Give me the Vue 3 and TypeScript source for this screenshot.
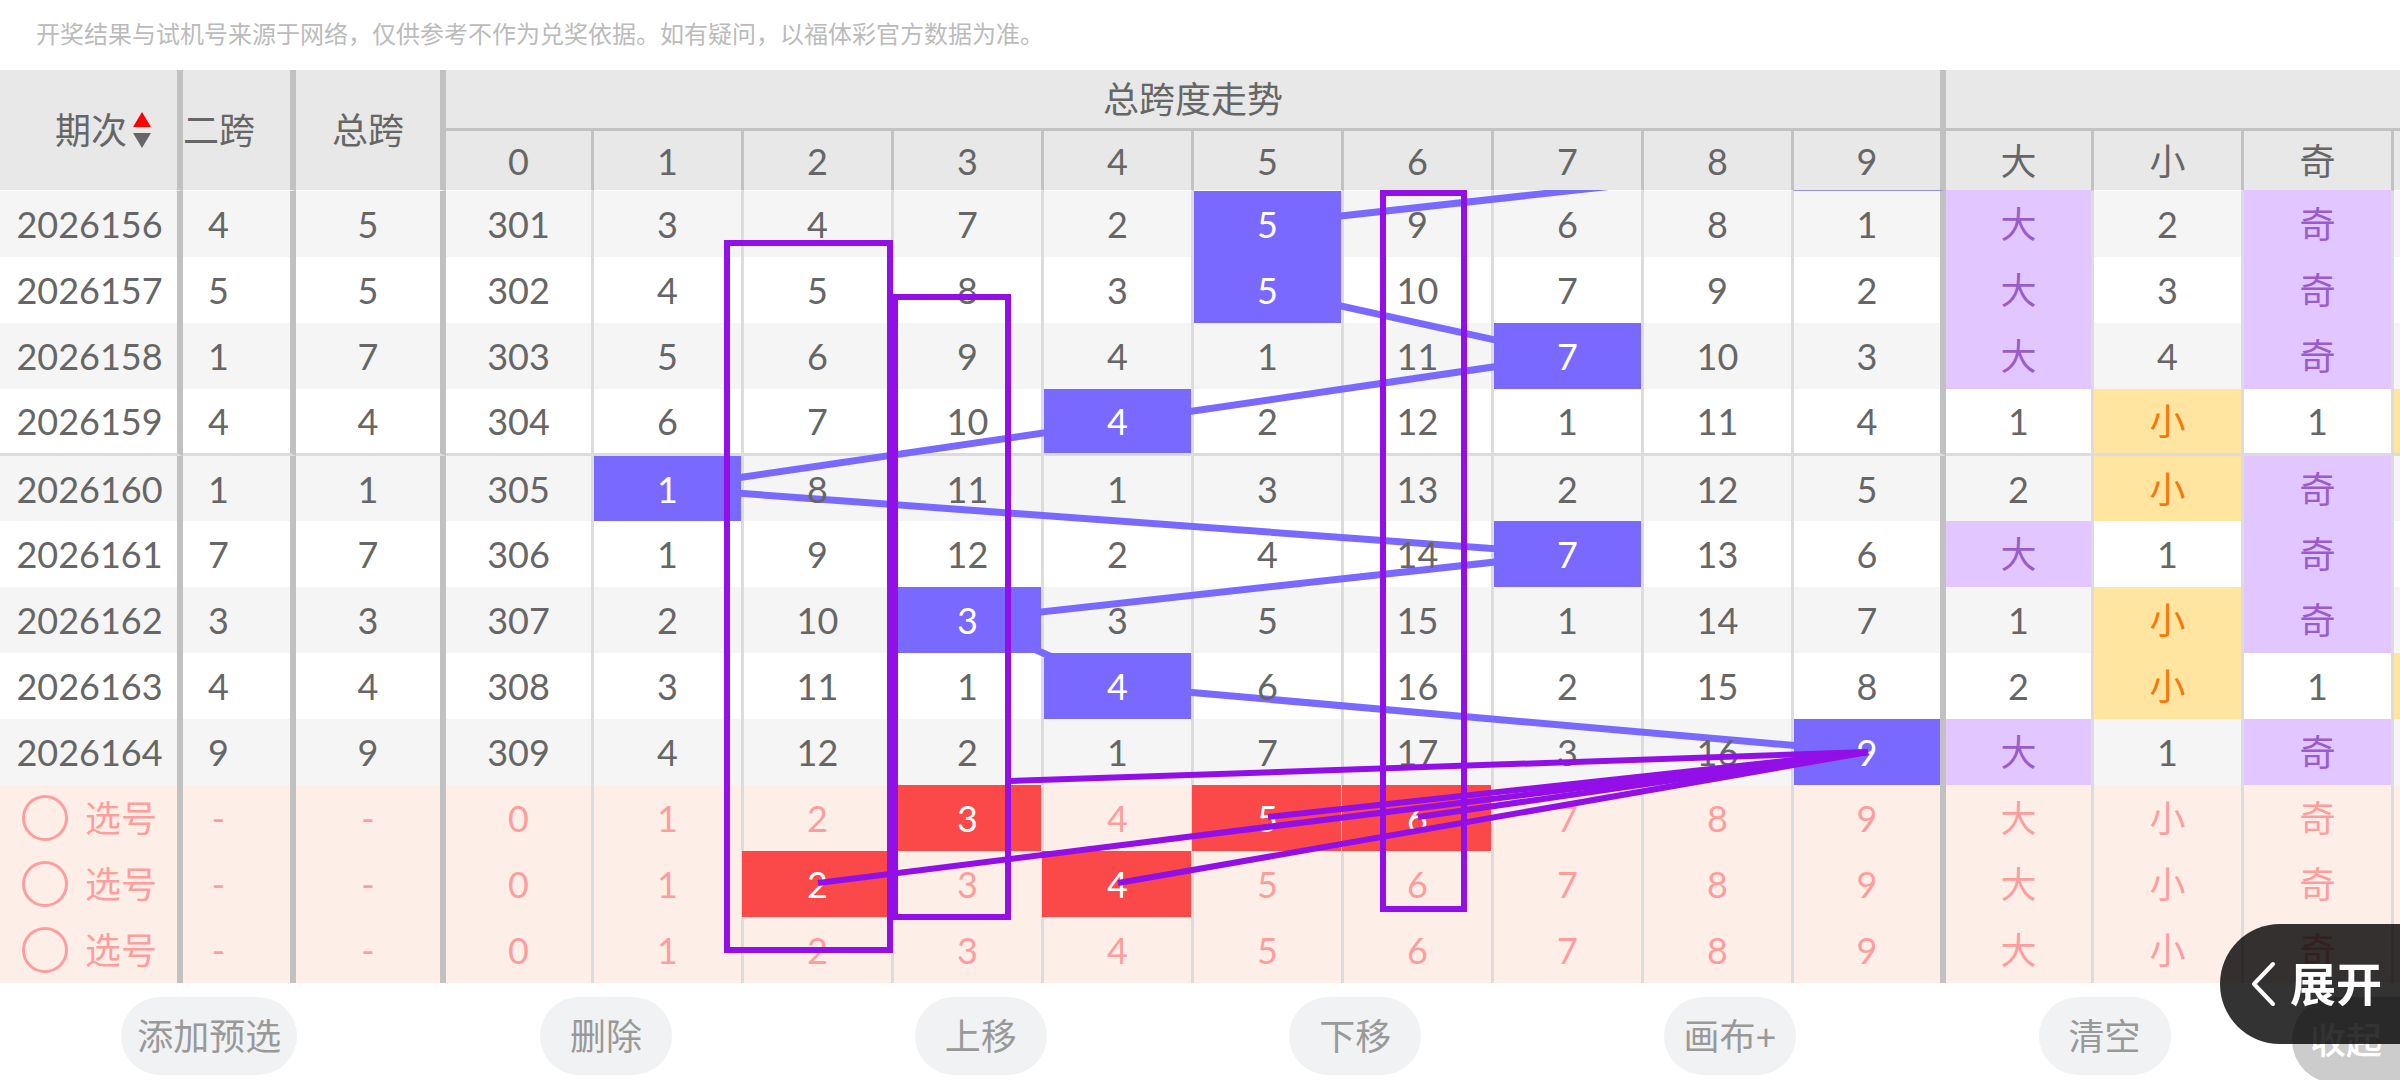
<script setup lang="ts">
import { ref } from 'vue'

type Kind = '' | 'hit' | 'violet' | 'amber' | 'picked'
interface Cell { text: string; kind: Kind }
interface DrawRow { period: string; second: number; total: number; cells: Cell[]; divider: boolean }
interface PickRow { id: number; cells: Cell[] }

// Column widths as parts of the visible 2400-unit sheet.
const columns: number[] = [183, 113, 150, 148, 150, 150, 150, 150, 150, 150, 150, 150, 152, 148, 150, 150, 6]
const digits: number[] = [0, 1, 2, 3, 4, 5, 6, 7, 8, 9]

// period | second span | total span | ten gap counts | big, small, odd, even
const source: string[] = [
  '2026156|4|5|301 3 4 7 2 5 9 6 8 1|大 2 奇 .',
  '2026157|5|5|302 4 5 8 3 5 10 7 9 2|大 3 奇 .',
  '2026158|1|7|303 5 6 9 4 1 11 7 10 3|大 4 奇 .',
  '2026159|4|4|304 6 7 10 4 2 12 1 11 4|1 小 1 偶',
  '2026160|1|1|305 1 8 11 1 3 13 2 12 5|2 小 奇 .',
  '2026161|7|7|306 1 9 12 2 4 14 7 13 6|大 1 奇 .',
  '2026162|3|3|307 2 10 3 3 5 15 1 14 7|1 小 奇 .',
  '2026163|4|4|308 3 11 1 4 6 16 2 15 8|2 小 1 偶',
  '2026164|9|9|309 4 12 2 1 7 17 3 16 9|大 1 奇 .',
]

const kindOf: Record<string, Kind> = { 大: 'violet', 奇: 'violet', 小: 'amber', 偶: 'amber' }

const draws: DrawRow[] = source.map((line, index) => {
  const [period, second, total, gaps, shape] = line.split('|')
  const trend: Cell[] = gaps.split(' ').map((text, n) => ({ text, kind: n === Number(total) ? 'hit' : '' }))
  const marks: Cell[] = shape.split(' ').map((text, n) => ({
    text: n === 3 ? '' : text,
    kind: kindOf[text] ?? '',
  }))
  return { period, second: Number(second), total: Number(total), cells: [...trend, ...marks], divider: index === 3 }
})

const picked: number[][] = [[3, 5, 6], [2, 4], []]
const picks: PickRow[] = picked.map((chosen, id) => ({
  id,
  cells: [
    ...digits.map((n): Cell => ({ text: String(n), kind: chosen.includes(n) ? 'picked' : '' })),
    ...['大', '小', '奇', ''].map((text): Cell => ({ text, kind: '' })),
  ],
}))

const selected = ref<number | null>(null)

// The trend starts from the previous draw (a 9), which is scrolled under the header.
const centreX = (n: number): number => 518 + n * 150
const centreY = (row: number): number => 34 + row * 66
const trendPoints: string = [9, ...draws.map((d) => d.total)]
  .map((n, i) => `${centreX(n)},${centreY(i - 1)}`)
  .join(' ')

const frames = [
  { x: 727, y: 53, w: 163, h: 707 },
  { x: 895, y: 107, w: 113, h: 620 },
  { x: 1383, y: 3, w: 81, h: 716 },
]
const rays = [
  { x: 1010, y: 591 },
  { x: centreX(5), y: 627 },
  { x: centreX(6), y: 627 },
  { x: centreX(2), y: 693 },
  { x: centreX(4), y: 693 },
]

const actions: string[] = ['添加预选', '删除', '上移', '下移', '画布+', '清空']
</script>

<template>
  <main class="page">
    <p class="notice">开奖结果与试机号来源于网络，仅供参考不作为兑奖依据。如有疑问，以福体彩官方数据为准。</p>

    <div class="sheet">
      <table class="chart">
        <colgroup>
          <col v-for="(w, i) in columns" :key="i" :style="{ width: w / 24 + '%' }" />
        </colgroup>
        <thead>
          <tr class="head-top">
            <th rowspan="2" class="heavy">
              <button type="button" class="sort">
                期次
                <svg width="18" height="36" viewBox="0 0 18 36" aria-hidden="true">
                  <path d="M9 0L18 15H0Z" fill="#ff0000" />
                  <path d="M0 21H18L9 36Z" fill="#666666" />
                </svg>
              </button>
            </th>
            <th rowspan="2" class="heavy second">二跨</th>
            <th rowspan="2" class="heavy">总跨</th>
            <th colspan="10" class="heavy group">总跨度走势</th>
            <th colspan="4" class="group"></th>
          </tr>
          <tr class="head-bottom">
            <th v-for="n in digits" :key="n" :class="{ heavy: n === 9, 'edge-hit': n === 9 }">{{ n }}</th>
            <th class="edge-violet">大</th>
            <th>小</th>
            <th class="edge-violet">奇</th>
            <th class="cut"></th>
          </tr>
        </thead>
        <tbody>
          <tr v-for="row in draws" :key="row.period" class="draw" :class="{ divider: row.divider }">
            <td class="heavy period">{{ row.period }}</td>
            <td class="heavy second">{{ row.second }}</td>
            <td class="heavy">{{ row.total }}</td>
            <td
              v-for="(cell, i) in row.cells"
              :key="i"
              :class="[cell.kind, { heavy: i === 9, cut: i === 13 }]"
            ><span class="value">{{ cell.text }}</span></td>
          </tr>
          <tr v-for="row in picks" :key="row.id" class="pick">
            <td class="heavy">
              <label class="choice">
                <input v-model="selected" type="radio" name="pick" :value="row.id" />
                选号
              </label>
            </td>
            <td class="heavy second">-</td>
            <td class="heavy">-</td>
            <td
              v-for="(cell, i) in row.cells"
              :key="i"
              :class="[cell.kind, { heavy: i === 9, cut: i === 13 }]"
            ><span class="value">{{ cell.text }}</span></td>
          </tr>
        </tbody>
      </table>

      <svg class="layer trend" viewBox="0 0 2400 793" preserveAspectRatio="none" aria-hidden="true">
        <polyline :points="trendPoints" fill="none" stroke="#7a69ff" stroke-width="7" vector-effect="non-scaling-stroke" />
      </svg>
      <svg class="layer drawing" viewBox="0 0 2400 793" preserveAspectRatio="none" aria-hidden="true">
        <g fill="none" stroke="#920fe8">
          <rect
            v-for="(f, i) in frames"
            :key="'f' + i"
            :x="f.x"
            :y="f.y"
            :width="f.w"
            :height="f.h"
            stroke-width="6"
            vector-effect="non-scaling-stroke"
          />
          <line
            v-for="(r, i) in rays"
            :key="'r' + i"
            :x1="r.x"
            :y1="r.y"
            :x2="centreX(9)"
            :y2="centreY(8)"
            stroke-width="6"
            vector-effect="non-scaling-stroke"
          />
        </g>
      </svg>
    </div>

    <footer class="toolbar">
      <div class="actions">
        <button v-for="a in actions" :key="a" type="button" class="action">{{ a }}</button>
      </div>
      <button type="button" class="collapse">收起</button>
    </footer>

    <button type="button" class="expand">
      <svg width="26" height="46" viewBox="0 0 26 46" aria-hidden="true">
        <path d="M23 3L4 23L23 43" fill="none" stroke="#ffffff" stroke-width="4" stroke-linecap="round" stroke-linejoin="round" />
      </svg>
      展开
    </button>
  </main>
</template>

<style>
body {
  margin: 0;
  background: #ffffff;
}
</style>

<style scoped>
.page {
  font-family: Lato, "Noto Sans CJK SC", sans-serif;
  font-size: 36px;
  line-height: 48px;
  color: #666666;
  overflow: hidden;
}

button {
  font: inherit;
  color: inherit;
  border: 0;
  padding: 0;
  background: none;
  cursor: pointer;
  white-space: nowrap;
}

.notice {
  margin: 0;
  padding: 0 36px;
  font-size: 24px;
  line-height: 68px;
  height: 70px;
  box-sizing: border-box;
  color: #bbbbbb;
}

.sheet {
  position: relative;
  isolation: isolate;
}

.chart {
  width: 100%;
  table-layout: fixed;
  border-collapse: separate;
  border-spacing: 0;
}

th,
td {
  box-sizing: border-box;
  height: 66px;
  padding: 0;
  font-weight: 400;
  text-align: center;
  white-space: nowrap;
  border-right: 3px solid #dcdcdc;
  background-clip: padding-box;
}

thead tr {
  background: #e8e8e8;
}

th {
  height: 60px;
  border-right-color: #c2c2c2;
  border-bottom: 1px solid #ffffff;
}

.head-top .group {
  height: 61px;
  border-bottom: 3px solid #c2c2c2;
}

th.group:last-child,
.cut {
  border-right: 0;
}

.edge-hit {
  border-bottom-color: #9a90e0;
}

.edge-violet {
  border-bottom-color: #e2c6ff;
}

th.heavy,
td.heavy {
  border-right: 6px solid #c1c1c1;
}

.second {
  padding-right: 36px;
}

.period {
  padding-left: 2px;
}

.sort {
  display: flex;
  align-items: center;
  gap: 6px;
  padding-left: 55px;
}

.draw:nth-child(odd) {
  background: #f5f5f5;
}

.draw:nth-child(even) {
  background: #ffffff;
}

.divider td {
  height: 67px;
  border-bottom: 3px solid #dcdcdc;
}

.divider + .draw td {
  height: 65px;
}

.pick {
  background: #feeee8;
  color: #fd9e9e;
}

.value {
  position: relative;
  z-index: 2;
}

.hit,
.picked {
  position: relative;
  color: #ffffff;
}

/* The fill lies over the trend line, while the cell's border stays under it. */
.hit::before,
.picked::before {
  content: "";
  position: absolute;
  inset: 0;
  z-index: 2;
}

.hit::before {
  background: #7a69ff;
}

.picked::before {
  background: #fb4848;
  box-shadow: -2px 0 0 #fb4848;
}

.violet {
  background-color: #e2c6ff;
  color: #9a5cc8;
}

.amber {
  background-color: #ffe5a0;
  color: #f5780a;
}

.choice {
  display: flex;
  align-items: center;
  gap: 17px;
  padding-left: 22px;
}

.choice input {
  appearance: none;
  box-sizing: border-box;
  flex: none;
  width: 46px;
  height: 46px;
  margin: 0;
  border: 3px solid #fd9e9e;
  border-radius: 50%;
}

.choice input:checked {
  background: #fd9e9e;
}

.layer {
  position: absolute;
  top: 120px;
  left: 0;
  width: 100%;
  height: calc(100% - 120px);
  pointer-events: none;
}

.trend {
  z-index: 1;
}

.drawing {
  z-index: 3;
}

.toolbar {
  display: flex;
  height: 97px;
  overflow: hidden;
  color: #999999;
}

.actions {
  flex: 1;
  display: flex;
  justify-content: space-around;
  padding-top: 14px;
}

.action {
  min-width: 132px;
  height: 78px;
  padding: 0 16px;
  border-radius: 39px;
  background: #f1f2f4;
}

.collapse {
  flex: none;
  width: 108px;
  height: 86px;
  margin-top: 14px;
  border-radius: 43px 0 0 43px;
  background: rgba(0, 0, 0, 0.2);
  color: #ffffff;
  font-weight: 500;
}

.expand {
  position: fixed;
  right: 0;
  bottom: 36px;
  z-index: 4;
  display: flex;
  align-items: center;
  gap: 14px;
  width: 180px;
  height: 120px;
  padding-left: 30px;
  border-radius: 60px 0 0 60px;
  background: rgba(0, 0, 0, 0.8);
  color: #ffffff;
  font-size: 46px;
  font-weight: 700;
}
</style>
